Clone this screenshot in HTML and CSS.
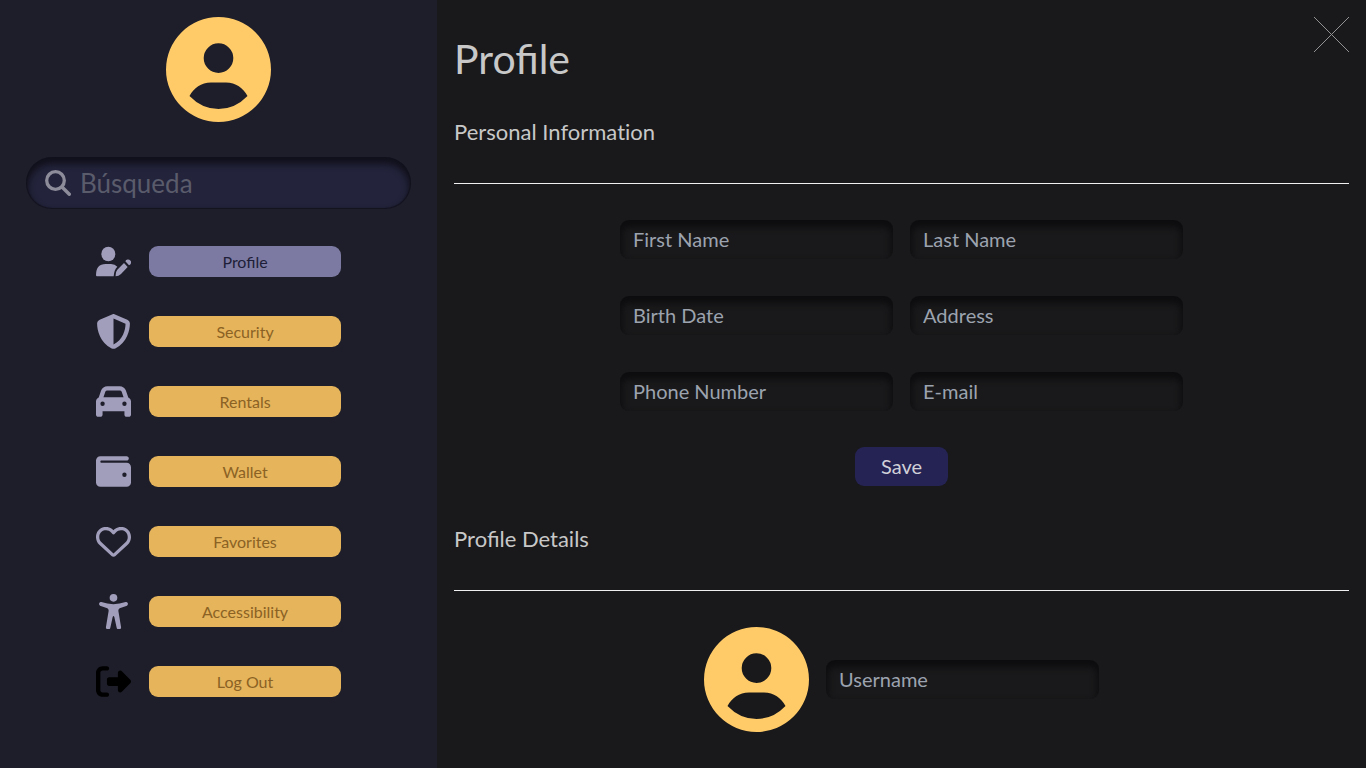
FILE: index.html
```html
<!DOCTYPE html>
<html lang="en">
<head>
<meta charset="utf-8">
<meta name="viewport" content="width=device-width, initial-scale=1">
<title>Profile</title>
<link rel="stylesheet" href="styles.css">
</head>
<body>
<svg class="defs" aria-hidden="true">
  <symbol id="avatar" viewBox="0 0 105 105">
    <path fill-rule="evenodd" d="M52.500 0a52.500 52.500 0 1 1 0 105a52.500 52.500 0 1 1 0-105zM52.500 26.300a14.800 14.800 0 1 0 0 29.600a14.800 14.800 0 1 0 0-29.600zM23.500 79Q36 92 52.500 92T81.500 79C77 71 70 65.500 60 65.500H45C35 65.500 28 71 23.500 79z"/>
  </symbol>
</svg>
<div class="app">
  <aside class="sidebar">
    <svg class="avatar" role="img" aria-label="User avatar"><use href="#avatar"/></svg>
    <label class="search">
      <svg class="search-icon" viewBox="0 0 26 26" aria-hidden="true"><circle cx="10.500" cy="10.500" r="8.800" fill="none" stroke="currentColor" stroke-width="3.300"/><path d="M17 17l7.300 7.300" stroke="currentColor" stroke-width="3.400" stroke-linecap="round"/></svg>
      <input class="search-input" type="search" placeholder="Búsqueda" aria-label="Búsqueda">
    </label>
    <nav class="menu">
      <div class="menu-row">
        <svg class="menu-icon" viewBox="0 0 105 105" aria-hidden="true"><ellipse cx="37" cy="30" rx="21" ry="22"/><path d="M29 60H45Q57 60 64 68Q54 78 53 97H3Q0 97 0 93Q0 60 29 60zM59 97Q58 84 64 77L84 57L95 69L75 90Q68 97 59 97zM88 52A9 9 0 1 1 99 64z"/></svg>
        <button class="menu-button active" type="button">Profile</button>
      </div>
      <div class="menu-row">
        <svg class="menu-icon" viewBox="0 0 512 512" aria-hidden="true"><path d="M256 0c4.600 0 9.200 1 13.400 2.900L457.700 82.800c22 9.300 38.400 31 38.300 57.200c-.5 99.200-41.300 280.700-213.600 363.200c-16.700 8-36.100 8-52.800 0C57.300 420.700 16.500 239.200 16 140c-.1-26.200 16.300-47.900 38.300-57.200L242.700 2.900C246.800 1 251.400 0 256 0zm0 66.800V444.800C394 378 431.100 230.100 432 141.400L256 66.800z"/></svg>
        <button class="menu-button" type="button">Security</button>
      </div>
      <div class="menu-row">
        <svg class="menu-icon" viewBox="0 0 512 512" aria-hidden="true"><path d="M135.200 117.400L109.100 192H402.900l-26.100-74.600C372.300 104.600 360.200 96 346.600 96H165.400c-13.600 0-25.700 8.600-30.200 21.400zM39.600 196.800L74.800 96.300C88.300 57.800 124.600 32 165.400 32H346.600c40.800 0 77.100 25.800 90.600 64.300l35.200 100.500c23.200 9.600 39.600 32.500 39.600 59.200V448c0 17.700-14.300 32-32 32H448c-17.700 0-32-14.300-32-32V400H96v48c0 17.700-14.300 32-32 32H32c-17.700 0-32-14.300-32-32V256c0-26.700 16.400-49.600 39.600-59.200zM128 288a32 32 0 1 0 -64 0 32 32 0 1 0 64 0zm288 32a32 32 0 1 0 0-64 32 32 0 1 0 0 64z"/></svg>
        <button class="menu-button" type="button">Rentals</button>
      </div>
      <div class="menu-row">
        <svg class="menu-icon" viewBox="0 0 512 512" aria-hidden="true"><path d="M64 32C28.700 32 0 60.700 0 96V416c0 35.300 28.700 64 64 64H448c35.300 0 64-28.700 64-64V192c0-35.300-28.700-64-64-64H80c-8.800 0-16-7.200-16-16s7.200-16 16-16H448c17.700 0 32-14.300 32-32s-14.300-32-32-32H64zM416 272a32 32 0 1 1 0 64 32 32 0 1 1 0-64z"/></svg>
        <button class="menu-button" type="button">Wallet</button>
      </div>
      <div class="menu-row">
        <svg class="menu-icon" viewBox="0 0 512 512" aria-hidden="true"><path d="M225.800 468.200l-2.500-2.300L48.100 303.200C17.400 274.700 0 234.700 0 192.800v-3.300c0-70.400 50-130.800 119.200-144C158.600 37.900 198.900 47 231 69.600c9 6.400 17.400 13.800 25 22.300c4.200-4.800 8.700-9.200 13.500-13.300c3.700-3.200 7.500-6.200 11.500-9c32.100-22.600 72.400-31.700 111.800-24.200C462 58.600 512 119.100 512 189.500v3.300c0 41.900-17.400 81.900-48.100 110.400L288.700 465.900l-2.500 2.300c-8.200 7.600-19 11.900-30.200 11.900s-22-4.200-30.200-11.900zM239.100 145c-.4-.3-.7-.7-1-1.100l-17.800-20c-23.100-25.900-58-37.700-92-31.200C81.600 101.500 48 142.100 48 189.500v3.300c0 28.500 11.900 55.800 32.800 75.200L256 430.700 431.200 268c20.900-19.400 32.800-46.700 32.800-75.200v-3.300c0-47.300-33.600-88-80.100-96.900c-34-6.500-69 5.400-92 31.200l-17.800 20c-.3 .4-.7 .7-1 1.100c-4.500 4.500-10.600 7-16.900 7s-12.400-2.500-16.900-7z"/></svg>
        <button class="menu-button" type="button">Favorites</button>
      </div>
      <div class="menu-row">
        <svg class="menu-icon" viewBox="0 0 105 105" aria-hidden="true"><circle cx="52.500" cy="11.500" r="11.500"/><path d="M16 24Q52 37 89 24A6 6 0 0 1 93 35L71 43Q67 45 67 50L75 98A6.500 6.500 0 0 1 62 101L55 69Q52.500 63 50 69L43 101A6.500 6.500 0 0 1 30 98L38 50Q38 45 34 43L12 35A6 6 0 0 1 16 24z"/></svg>
        <button class="menu-button" type="button">Accessibility</button>
      </div>
      <div class="menu-row">
        <svg class="menu-icon exit" viewBox="0 0 512 512" aria-hidden="true"><path d="M377.900 105.900L500.700 228.700c7.200 7.200 11.300 17.100 11.300 27.300s-4.100 20.100-11.300 27.300L377.900 406.100c-6.400 6.400-15 9.900-24 9.900c-18.700 0-33.900-15.200-33.900-33.900V320H192c-17.700 0-32-14.300-32-32V224c0-17.700 14.300-32 32-32H320V129.900c0-18.700 15.200-33.900 33.900-33.900c9 0 17.600 3.600 24 9.900zM160 96H96c-17.700 0-32 14.300-32 32V384c0 17.700 14.300 32 32 32h64c17.700 0 32 14.300 32 32s-14.300 32-32 32H96c-53 0-96-43-96-96V128C0 75 43 32 96 32h64c17.700 0 32 14.300 32 32s-14.300 32-32 32z"/></svg>
        <button class="menu-button" type="button">Log Out</button>
      </div>
    </nav>
  </aside>
  <main class="content">
    <header class="header">
      <h1 class="title">Profile</h1>
      <button class="close" type="button" aria-label="Close">
        <svg class="close-icon" viewBox="0 0 35 35" aria-hidden="true"><path d="M0 0L35 35M35 0L0 35"/></svg>
      </button>
    </header>
    <section class="section">
      <h2 class="section-title plain">Personal Information</h2>
      <form class="form">
        <div class="fields">
          <input class="field" type="text" placeholder="First Name" aria-label="First Name">
          <input class="field" type="text" placeholder="Last Name" aria-label="Last Name">
          <input class="field" type="text" placeholder="Birth Date" aria-label="Birth Date">
          <input class="field" type="text" placeholder="Address" aria-label="Address">
          <input class="field" type="tel" placeholder="Phone Number" aria-label="Phone Number">
          <input class="field" type="email" placeholder="E-mail" aria-label="E-mail">
        </div>
        <button class="save" type="button">Save</button>
      </form>
    </section>
    <section class="section">
      <h2 class="section-title">Profile Details</h2>
      <div class="details">
        <svg class="avatar" role="img" aria-label="Profile picture"><use href="#avatar"/></svg>
        <input class="field" type="text" placeholder="Username" aria-label="Username">
      </div>
    </section>
  </main>
</div>
</body>
</html>
```

FILE: styles.css
```css
* {
  box-sizing: border-box;
}

body {
  margin: 0;
  background: #19191b;
  color: #c8c8c8;
  font-family: Lato, sans-serif;
}

button,
input {
  border: 0;
  font-family: inherit;
}

button {
  padding: 0;
  cursor: pointer;
}

.defs {
  position: absolute;
  width: 0;
  height: 0;
}

.app {
  display: grid;
  grid-template-columns: 32% 1fr;
  min-height: 100vh;
}

.sidebar {
  display: flex;
  flex-direction: column;
  align-items: center;
  gap: 35px;
  padding: 17px 26px;
  background: #1e1e2a;
}

.avatar {
  flex: none;
  width: 105px;
  height: 105px;
  fill: #ffcb69;
}

.search {
  display: flex;
  align-items: center;
  gap: 9px;
  width: 100%;
  height: 52px;
  padding: 0 19px;
  border-radius: 26px;
  background: #23233b;
  box-shadow: inset 0 5px 6px 2px #11111c, inset 0 0 1px 1px #14141f;
}

.search-icon {
  flex: none;
  width: 26px;
  height: 26px;
  color: #8d8c9a;
}

.search-input {
  flex: 1;
  min-width: 0;
  padding: 0;
  background: transparent;
  color: #c8c8c8;
  font-size: 26px;
  outline: 0;
}

.search-input::placeholder {
  color: #5a5b6b;
}

.menu {
  display: flex;
  flex-direction: column;
  gap: 35px;
}

.menu-row {
  display: flex;
  align-items: center;
  gap: 18px;
}

.menu-icon {
  width: 35px;
  height: 35px;
  fill: #a09ebb;
}

.exit {
  fill: #000;
}

.menu-button {
  width: 192px;
  height: 31px;
  border-radius: 9px;
  background: #e5b45b;
  color: #8b6224;
  font-size: 16px;
}

.menu-button.active {
  background: #7c7aa2;
  color: #1e1e38;
}

.content {
  padding: 17px;
}

.header {
  display: flex;
  justify-content: space-between;
  align-items: flex-start;
}

.title {
  margin: 18px 0 35px;
  font-size: 41px;
  font-weight: 400;
  line-height: 48px;
}

.close {
  width: 35px;
  height: 35px;
  background: transparent;
}

.close-icon {
  display: block;
  stroke: #929292;
  stroke-width: 1;
}

.section-title {
  margin: 0 0 36px;
  padding-bottom: 37px;
  border-bottom: 1px solid #f0f0f0;
  font-size: 22px;
  font-weight: 400;
  line-height: 28px;
}

.plain {
  font-variant-ligatures: none;
}

.section + .section {
  margin-top: 39px;
}

.form {
  display: flex;
  flex-direction: column;
  align-items: center;
  gap: 36px;
}

.fields {
  display: grid;
  grid-template-columns: 273px 273px;
  gap: 37px 17px;
}

.field {
  width: 273px;
  height: 39px;
  padding: 0 13px 1px;
  border-radius: 9px;
  background: #19191b;
  box-shadow: inset 0 5px 6px 2px #0d0d0f;
  color: #c8c8c8;
  font-size: 20px;
}

.field::placeholder {
  color: #9ca3af;
}

.save {
  width: 93px;
  height: 39px;
  padding-bottom: 1px;
  border-radius: 9px;
  background: #252354;
  color: #d0d0d8;
  font-size: 20px;
}

.details {
  display: flex;
  justify-content: center;
  align-items: center;
  gap: 17px;
}
```
